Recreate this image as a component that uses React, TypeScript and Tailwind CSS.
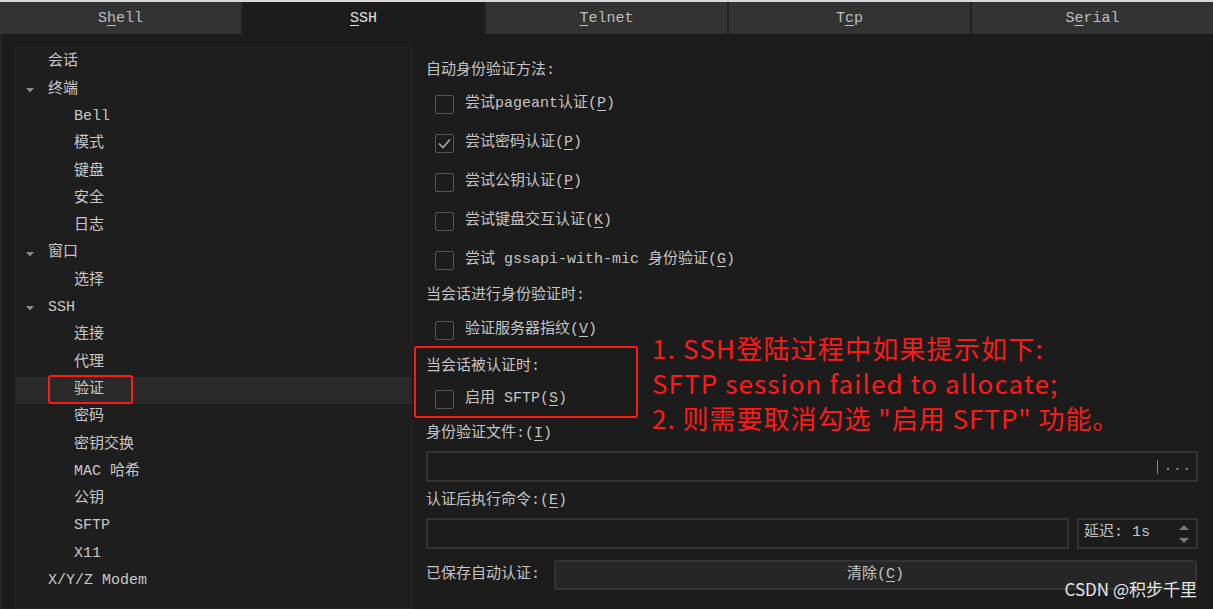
import React from "react";

const mono = { fontFamily: '"Liberation Mono", "Noto Sans CJK SC", monospace' };
const cjk = { fontFamily: '"Noto Sans CJK SC", "Noto Sans", sans-serif' };

function U({ children }: { children: React.ReactNode }) {
  return <span className="underline underline-offset-[3px] decoration-1">{children}</span>;
}

function Tab({ children, active }: { children: React.ReactNode; active?: boolean }) {
  return (
    <div
      className={
        "flex-1 flex items-center justify-center pt-[2px] text-[15px] border-l-2 border-[#222] first:border-l-0 " +
        (active ? "bg-[#1c1c1c] text-[#e0e0e0]" : "bg-[#333333] text-[#bdbdbd]")
      }
    >
      {children}
    </div>
  );
}

type Node = { label: string; level: number; arrow?: boolean; selected?: boolean };

const tree: Node[] = [
  { label: "会话", level: 0 },
  { label: "终端", level: 0, arrow: true },
  { label: "Bell", level: 1 },
  { label: "模式", level: 1 },
  { label: "键盘", level: 1 },
  { label: "安全", level: 1 },
  { label: "日志", level: 1 },
  { label: "窗口", level: 0, arrow: true },
  { label: "选择", level: 1 },
  { label: "SSH", level: 0, arrow: true },
  { label: "连接", level: 1 },
  { label: "代理", level: 1 },
  { label: "验证", level: 1, selected: true },
  { label: "密码", level: 1 },
  { label: "密钥交换", level: 1 },
  { label: "MAC 哈希", level: 1 },
  { label: "公钥", level: 1 },
  { label: "SFTP", level: 1 },
  { label: "X11", level: 1 },
  { label: "X/Y/Z Modem", level: 0 },
];

function Check({ checked }: { checked?: boolean }) {
  return (
    <div className="w-[19px] h-[19px] border-[1.5px] border-[#555] rounded-[2px] flex items-center justify-center shrink-0">
      {checked && (
        <svg width="15" height="15" viewBox="0 0 15 15">
          <polyline points="2,7.5 6,11.5 13,3.5" fill="none" stroke="#aaa" strokeWidth="1.6" />
        </svg>
      )}
    </div>
  );
}

function CheckRow({ checked, children }: { checked?: boolean; children: React.ReactNode }) {
  return (
    <div className="h-[39px] flex items-center pl-[9px] gap-[11px] text-[15px] text-[#c4c4c4]">
      <Check checked={checked} />
      <span>{children}</span>
    </div>
  );
}

function Label({ children }: { children: React.ReactNode }) {
  return <div className="h-[24px] flex items-center text-[15px] text-[#c4c4c4]">{children}</div>;
}

export default function App() {
  return (
    <div className="w-[1213px] h-[609px] bg-[#1c1c1c] flex flex-col overflow-hidden relative" style={mono}>
      <div className="h-[2px] bg-[#d8d8d8]" />
      <div className="h-[32px] flex">
        <Tab>
          S<U>h</U>ell
        </Tab>
        <Tab active>
          <U>S</U>SH
        </Tab>
        <Tab>
          <U>T</U>elnet
        </Tab>
        <Tab>
          T<U>c</U>p
        </Tab>
        <Tab>
          S<U>e</U>rial
        </Tab>
      </div>
      <div className="flex-1 flex border-l-2 border-[#262626]">
        <div className="ml-[13px] mt-[13px] w-[397px] bg-[#1e1e1e] border border-[#262626] pt-[1px] flex flex-col">
          {tree.map((n, i) => (
            <div
              key={i}
              className={"h-[27.3px] flex items-center relative shrink-0 " + (n.selected ? "bg-[#2a2a2a]" : "")}
            >
              {n.arrow && (
                <svg className="absolute left-[9px]" width="10" height="8" viewBox="0 0 10 8">
                  <polygon points="1,2 9,2 5,6.5" fill="#8a8a8a" />
                </svg>
              )}
              <span
                className={"text-[15px] text-[#c8c8c8] " + (n.level === 0 ? "ml-[32px]" : "ml-[58px]")}
              >
                {n.label}
              </span>
              {n.selected && (
                <div className="absolute left-[32px] top-[-2px] w-[85px] h-[29px] border-2 border-[#ff1a1a] rounded-[3px]" />
              )}
            </div>
          ))}
        </div>
        <div className="flex-1 ml-[14px] mr-[15px] mt-[25px] flex flex-col relative">
          <Label>自动身份验证方法:</Label>
          <div className="h-[2px]" />
          <CheckRow>
            尝试pageant认证(<U>P</U>)
          </CheckRow>
          <CheckRow checked>
            尝试密码认证(<U>P</U>)
          </CheckRow>
          <CheckRow>
            尝试公钥认证(<U>P</U>)
          </CheckRow>
          <CheckRow>
            尝试键盘交互认证(<U>K</U>)
          </CheckRow>
          <CheckRow>
            尝试 gssapi-with-mic 身份验证(<U>G</U>)
          </CheckRow>
          <div className="h-[4px]" />
          <Label>当会话进行身份验证时:</Label>
          <div className="h-[3px]" />
          <CheckRow>
            验证服务器指纹(<U>V</U>)
          </CheckRow>
          <div className="relative pt-[5px]">
            <Label>当会话被认证时:</Label>
            <div className="h-[1px]" />
            <CheckRow>
              启用 SFTP(<U>S</U>)
            </CheckRow>
            <div className="absolute left-[-12px] top-[-4px] w-[224px] h-[72px] border-2 border-[#ff1a1a] rounded-[3px]" />
          </div>
          <div className="h-[3px]" />
          <Label>
            身份验证文件:(<U>I</U>)
          </Label>
          <div className="h-[5px]" />
          <div className="h-[31px] border-2 border-[#333] bg-[#1c1c1c] flex items-center justify-end pr-[4px] text-[#9a9a9a] text-[14px]">
            <div className="w-[1px] h-[14px] bg-[#888] mr-[6px]" />
            <span className="tracking-[1px]">...</span>
          </div>
          <div className="h-[7px]" />
          <Label>
            认证后执行命令:(<U>E</U>)
          </Label>
          <div className="h-[5px]" />
          <div className="h-[31px] flex gap-[8px]">
            <div className="flex-1 border-2 border-[#333] bg-[#1c1c1c]" />
            <div className="w-[121px] border-2 border-[#333] bg-[#1c1c1c] flex items-center pl-[5px] pr-[6px] text-[15px] text-[#c4c4c4]">
              <span className="flex-1">延迟: 1s</span>
              <svg width="12" height="20" viewBox="0 0 12 20">
                <polygon points="1,6 11,6 6,1" fill="#7a7a7a" />
                <polygon points="1,14 11,14 6,19" fill="#7a7a7a" />
              </svg>
            </div>
          </div>
          <div className="h-[11px]" />
          <div className="h-[30px] flex items-center gap-[12px]">
            <span className="text-[15px] text-[#c4c4c4] w-[116px] shrink-0">已保存自动认证:</span>
            <div className="flex-1 h-[30px] bg-[#262626] border-2 border-[#333] rounded-[3px] flex items-center justify-center text-[15px] text-[#c4c4c4] mr-[1px]">
              清除(<U>C</U>)
            </div>
          </div>
          <div
            className="absolute left-[226px] top-[271px] text-[26px] text-[#ff1a1a] flex flex-col"
            style={cjk}
          >
            <div className="h-[35px] leading-[35px] tracking-[1.2px]">1. SSH登陆过程中如果提示如下:</div>
            <div className="h-[35px] leading-[35px] tracking-[1.1px]">SFTP session failed to allocate;</div>
            <div className="h-[35px] leading-[35px] tracking-[1px]">2. 则需要取消勾选 "启用 SFTP" 功能。</div>
          </div>
        </div>
      </div>
      <div
        className="absolute right-[16px] bottom-[8px] text-[17px] text-[#e8e8e8]"
        style={cjk}
      >
        CSDN @积步千里
      </div>
    </div>
  );
}
